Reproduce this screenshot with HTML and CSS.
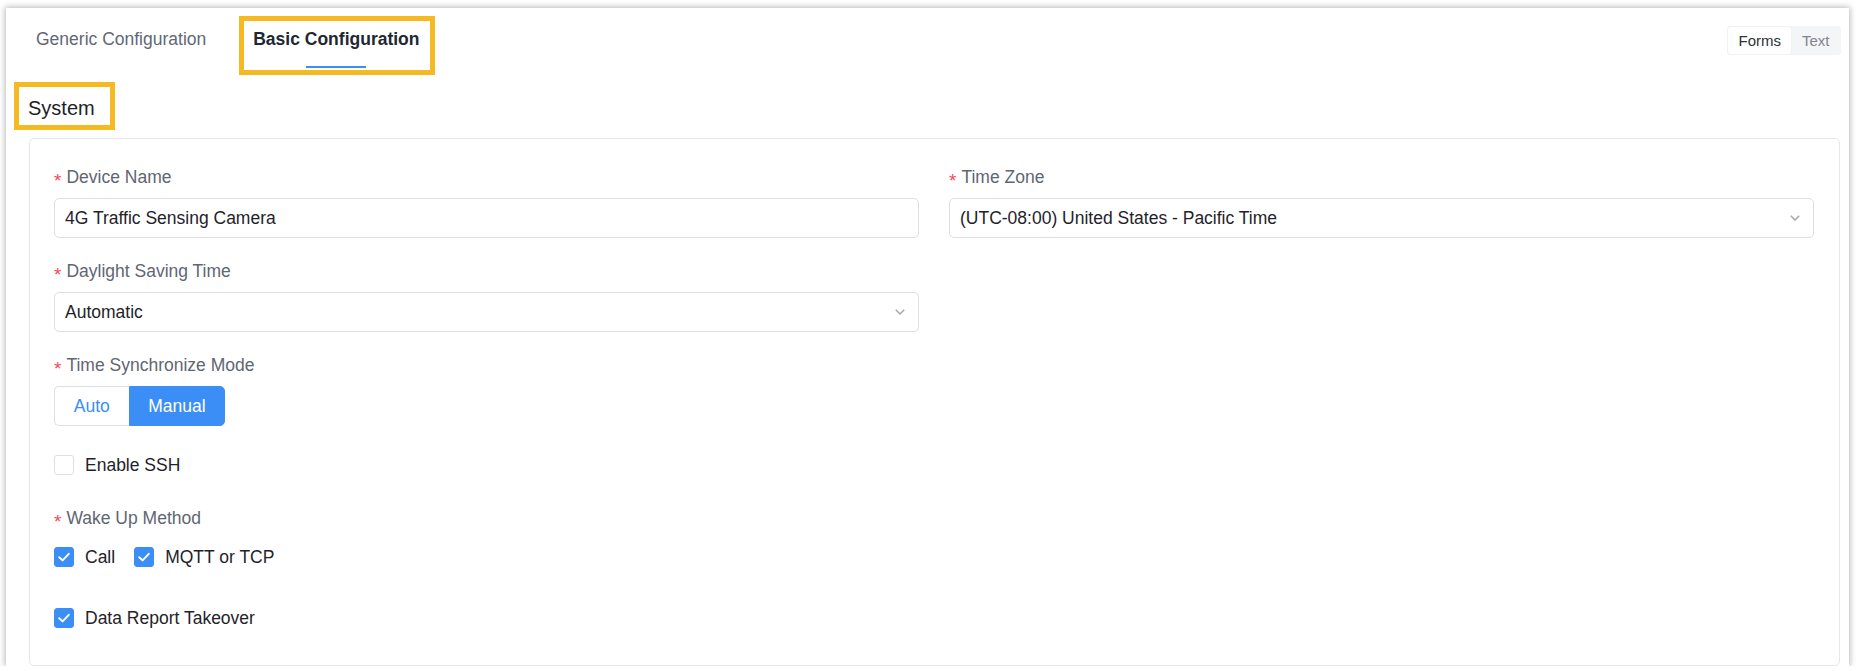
FILE: index.html
```html
<!DOCTYPE html>
<html lang="en">
<head>
<meta charset="utf-8">
<title>Basic Configuration</title>
<link rel="stylesheet" href="styles.css">
</head>
<body>
<div class="panel">
  <header class="top">
    <nav class="tabs">
      <div class="tab">Generic Configuration</div>
      <div class="tab active annotated">Basic Configuration</div>
    </nav>
    <div class="toggle">
      <span class="toggle-item on">Forms</span>
      <span class="toggle-item">Text</span>
    </div>
  </header>

  <section class="section">
    <h2 class="section-title"><span class="title-text annotated-title">System</span></h2>
    <div class="card">
      <div class="grid">
        <div class="item">
          <div class="label"><span class="req">*</span>Device Name</div>
          <div class="input">4G Traffic Sensing Camera</div>
        </div>
        <div class="item">
          <div class="label"><span class="req">*</span>Time Zone</div>
          <div class="input select">
            <span>(UTC-08:00) United States - Pacific Time</span>
            <svg class="chev" width="10" height="6" viewBox="0 0 10 6"><path d="M0.8 0.8 L5 5 L9.2 0.8" fill="none" stroke="#a3a7b0" stroke-width="1.5"/></svg>
          </div>
        </div>
        <div class="item col1">
          <div class="label"><span class="req">*</span>Daylight Saving Time</div>
          <div class="input select">
            <span>Automatic</span>
            <svg class="chev" width="10" height="6" viewBox="0 0 10 6"><path d="M0.8 0.8 L5 5 L9.2 0.8" fill="none" stroke="#a3a7b0" stroke-width="1.5"/></svg>
          </div>
        </div>
        <div class="item col1">
          <div class="label"><span class="req">*</span>Time Synchronize Mode</div>
          <div class="radio-group">
            <span class="radio-btn">Auto</span>
            <span class="radio-btn selected">Manual</span>
          </div>
        </div>
        <div class="item col1 check-item">
          <label class="cb"><span class="box"></span><span class="cb-text">Enable SSH</span></label>
        </div>
        <div class="item col1 wake">
          <div class="label"><span class="req">*</span>Wake Up Method</div>
          <div class="cb-group">
            <label class="cb"><span class="box checked"><svg width="20" height="20" viewBox="0 0 20 20"><path d="M5.2 10.2 L8.6 13.4 L14.8 6.8" fill="none" stroke="#fff" stroke-width="1.9" stroke-linecap="round" stroke-linejoin="round"/></svg></span><span class="cb-text">Call</span></label>
            <label class="cb"><span class="box checked"><svg width="20" height="20" viewBox="0 0 20 20"><path d="M5.2 10.2 L8.6 13.4 L14.8 6.8" fill="none" stroke="#fff" stroke-width="1.9" stroke-linecap="round" stroke-linejoin="round"/></svg></span><span class="cb-text">MQTT or TCP</span></label>
          </div>
        </div>
        <div class="item col1 check-item last">
          <label class="cb"><span class="box checked"><svg width="20" height="20" viewBox="0 0 20 20"><path d="M5.2 10.2 L8.6 13.4 L14.8 6.8" fill="none" stroke="#fff" stroke-width="1.9" stroke-linecap="round" stroke-linejoin="round"/></svg></span><span class="cb-text">Data Report Takeover</span></label>
        </div>
      </div>
    </div>
  </section>
</div>
</body>
</html>
```

FILE: styles.css
```css
* { box-sizing: border-box; }

html, body {
  margin: 0;
  padding: 0;
  background: #ffffff;
  font-family: "Liberation Sans", Arial, sans-serif;
  font-size: 17.5px;
  color: #303133;
}

.panel {
  margin: 8px 7px 0 6px;
  height: 658px;
  background: #ffffff;
  box-shadow: 0 0 6px 1px rgba(0, 0, 0, 0.28);
}

/* header / tabs */
.top {
  display: flex;
  justify-content: space-between;
  align-items: flex-start;
  padding: 16px 8px 0 6.5px;
}

.tabs {
  display: flex;
}

.tab {
  position: relative;
  padding: 0 23.5px 14px;
  height: 44px;
  line-height: 30px;
  font-size: 17.5px;
  color: #5f6877;
  white-space: nowrap;
}

.tab.active {
  color: #1f2733;
  font-weight: bold;
}

.tab.active::before {
  content: "";
  position: absolute;
  left: 50%;
  bottom: 0;
  width: 60px;
  height: 2px;
  margin-left: -30px;
  background: #3a8ef6;
}

.annotated::after {
  content: "";
  position: absolute;
  top: -8px;
  left: 9px;
  right: 8px;
  bottom: -7px;
  border: 5px solid #f5b922;
  pointer-events: none;
}

.toggle {
  display: flex;
  margin-top: 2px;
  padding: 1px;
  background: #f4f5f7;
  border-radius: 3px;
}

.toggle-item {
  height: 27px;
  line-height: 27px;
  padding: 0 10.5px;
  font-size: 15px;
  color: #80858f;
  border-radius: 3px;
}

.toggle-item.on {
  background: #ffffff;
  color: #303133;
  box-shadow: 0 0 2px rgba(0, 0, 0, 0.06);
}

/* section */
.section {
  padding: 0 9px 0 23px;
}

.section-title {
  margin: 26px 0 16px -1px;
  height: 28px;
  font-size: 20px;
  line-height: 28px;
  font-weight: normal;
  color: #1f2329;
}

.title-text {
  position: relative;
  display: inline-block;
}

.annotated-title::after {
  content: "";
  position: absolute;
  top: -12px;
  left: -14px;
  right: -20px;
  bottom: -8px;
  border: 5px solid #f5b922;
}

.card {
  border: 1px solid #e4e7ed;
  border-radius: 5px;
  padding: 24px 25px 27px 24px;
}

.grid {
  display: grid;
  grid-template-columns: 1fr 1fr;
  column-gap: 30px;
}

.item {
  margin-bottom: 19px;
}

.col1 {
  grid-column: 1;
}

.item.last {
  margin-bottom: 0;
}

.label {
  display: flex;
  align-items: center;
  height: 28px;
  margin-bottom: 7px;
  color: #606672;
  white-space: nowrap;
}

.req {
  color: #f5495a;
  margin-right: 5px;
  font-size: 19px;
  line-height: 1;
  padding-top: 7px;
}

.input {
  display: flex;
  align-items: center;
  height: 40px;
  padding: 0 10px;
  border: 1px solid #dcdfe6;
  border-radius: 5px;
  color: #1f2329;
  background: #fff;
}

.select {
  justify-content: space-between;
}

.chev {
  margin-right: 3px;
}

.radio-group {
  display: flex;
  height: 40px;
}

.radio-btn {
  height: 40px;
  line-height: 38px;
  padding: 0 18.75px;
  border: 1px solid #dcdfe6;
  color: #3a8ef6;
  background: #fff;
}

.radio-btn:first-child {
  border-radius: 5px 0 0 5px;
  border-right: none;
}

.radio-btn.selected {
  background: #3a8ef6;
  border-color: #3a8ef6;
  color: #fff;
  border-radius: 0 5px 5px 0;
}

.check-item {
  display: flex;
  align-items: center;
  height: 40px;
}

.wake {
  margin-bottom: 23px;
}

.cb-group {
  display: flex;
  align-items: center;
  height: 36px;
}

.cb {
  display: inline-flex;
  align-items: center;
  margin-right: 19px;
}

.box {
  display: inline-flex;
  width: 20px;
  height: 20px;
  border: 1px solid #dcdfe6;
  border-radius: 3px;
  margin-right: 11px;
  background: #fff;
}

.box.checked {
  background: #3a8ef6;
  border-color: #3a8ef6;
}

.box svg {
  margin: -1px;
}

.cb-text {
  color: #1f2329;
  white-space: nowrap;
}
```
